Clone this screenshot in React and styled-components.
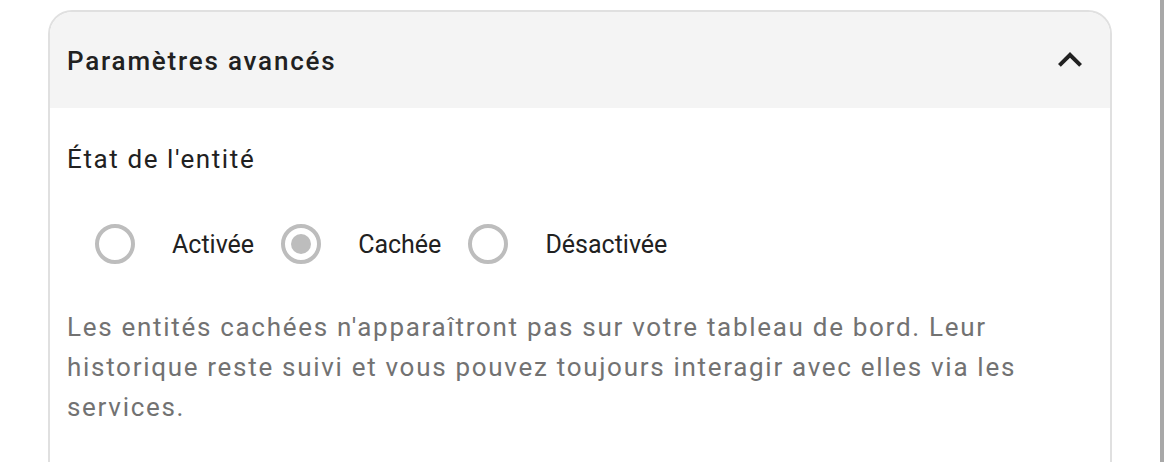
import styled, { createGlobalStyle } from "styled-components";

const GlobalStyle = createGlobalStyle`
  html, body {
    margin: 0;
    padding: 0;
    background: #ffffff;
    overflow: hidden;
  }
  body {
    font-family: Roboto, "Noto Sans", sans-serif;
    -webkit-font-smoothing: antialiased;
  }
`;

const Page = styled.div`
  height: 462px;
  padding: 10px 52px 0 48px;
  box-sizing: border-box;
`;

const ScrollThumb = styled.div`
  position: fixed;
  top: 0;
  right: 0;
  width: 4px;
  height: 100%;
  background: #a8a8a8;
`;

const Panel = styled.section`
  border: 2px solid #e0e0e0;
  border-bottom: none;
  border-radius: 24px 24px 0 0;
  overflow: hidden;
  height: 480px;
`;

const Header = styled.div`
  display: flex;
  align-items: center;
  justify-content: space-between;
  height: 96px;
  padding: 0 16px 0 17px;
  background: #f4f4f4;
`;

const Title = styled.h2`
  margin: 0;
  font-size: 26px;
  font-weight: 500;
  letter-spacing: 1.8px;
  color: #212121;
  padding-top: 2px;
`;

const Chevron = styled.svg`
  width: 48px;
  height: 48px;
  fill: #212121;
`;

const Body = styled.div`
  padding: 33px 17px 0 17px;
`;

const Label = styled.div`
  font-size: 26px;
  letter-spacing: 1.6px;
  color: #212121;
  line-height: 36px;
`;

const RadioGroup = styled.div`
  display: flex;
  align-items: center;
  margin-top: 27px;
  padding-left: 8px;
`;

const Option = styled.label`
  display: flex;
  align-items: center;
  margin-right: 7px;
  font-size: 25px;
  color: #212121;
`;

const RadioBox = styled.span`
  width: 80px;
  height: 80px;
  display: flex;
  align-items: center;
  justify-content: center;
  margin-right: 17px;
`;

const Ring = styled.span`
  width: 40px;
  height: 40px;
  box-sizing: border-box;
  border: 4px solid #bdbdbd;
  border-radius: 50%;
  display: flex;
  align-items: center;
  justify-content: center;

  &::after {
    content: "";
    width: 20px;
    height: 20px;
    border-radius: 50%;
    background: ${({ checked }) => (checked ? "#bdbdbd" : "transparent")};
  }
`;

const Description = styled.p`
  margin: 23px 0 0 0;
  font-size: 26px;
  line-height: 40px;
  letter-spacing: 1.7px;
  color: #727272;
`;

const options = [
  { label: "Activée", checked: false },
  { label: "Cachée", checked: true },
  { label: "Désactivée", checked: false },
];

export default function App() {
  return (
    <>
      <GlobalStyle />
      <Page>
        <Panel>
          <Header>
            <Title>Paramètres avancés</Title>
            <Chevron viewBox="0 0 24 24">
              <path d="M7.41,15.41L12,10.83L16.59,15.41L18,14L12,8L6,14L7.41,15.41Z" />
            </Chevron>
          </Header>
          <Body>
            <Label>État de l'entité</Label>
            <RadioGroup>
              {options.map((o) => (
                <Option key={o.label}>
                  <RadioBox>
                    <Ring checked={o.checked} />
                  </RadioBox>
                  {o.label}
                </Option>
              ))}
            </RadioGroup>
            <Description>
              Les entités cachées n'apparaîtront pas sur votre tableau de bord.
              Leur historique reste suivi et vous pouvez toujours interagir
              avec elles via les services.
            </Description>
          </Body>
        </Panel>
      </Page>
      <ScrollThumb />
    </>
  );
}
